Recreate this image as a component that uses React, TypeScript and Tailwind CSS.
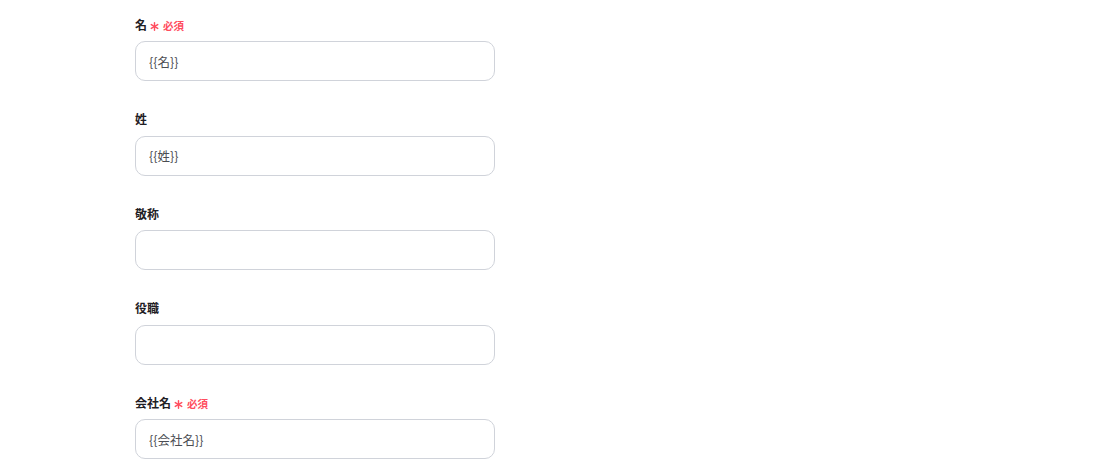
const fields = [
  { label: '名', value: '{{名}}', required: true },
  { label: '姓', value: '{{姓}}', required: false },
  { label: '敬称', value: '', required: false },
  { label: '役職', value: '', required: false },
  { label: '会社名', value: '{{会社名}}', required: true },
];

function Star() {
  return (
    <svg width="9" height="9" viewBox="0 0 10 10" className="ml-[3px] mt-[3px]">
      <g stroke="#ff4d5e" strokeWidth="1.6" strokeLinecap="round">
        <line x1="5" y1="0.8" x2="5" y2="9.2" />
        <line x1="1.4" y1="2.9" x2="8.6" y2="7.1" />
        <line x1="1.4" y1="7.1" x2="8.6" y2="2.9" />
      </g>
    </svg>
  );
}

export default function App() {
  return (
    <div
      className="min-h-[461px] w-full bg-white pl-[135px] pt-[16px]"
      style={{ fontFamily: '"Noto Sans CJK JP", "Noto Sans", sans-serif' }}
    >
      <div className="flex w-[360px] flex-col gap-[29.5px]">
        {fields.map((f) => (
          <div key={f.label} className="flex flex-col gap-[8px]">
            <div className="flex h-[17px] items-center">
              <span className="text-[12px] font-bold leading-none text-[#1f2024]">{f.label}</span>
              {f.required && (
                <>
                  <Star />
                  <span className="ml-[4px] mt-[3px] text-[10.5px] font-bold leading-none text-[#ff4d5e]">必須</span>
                </>
              )}
            </div>
            <input
              readOnly
              value={f.value}
              className="h-[40px] w-[360px] rounded-[10px] border border-[#d0d3da] bg-white px-[13px] text-[12.5px] text-[#4b4d52] outline-none"
            />
          </div>
        ))}
      </div>
    </div>
  );
}
